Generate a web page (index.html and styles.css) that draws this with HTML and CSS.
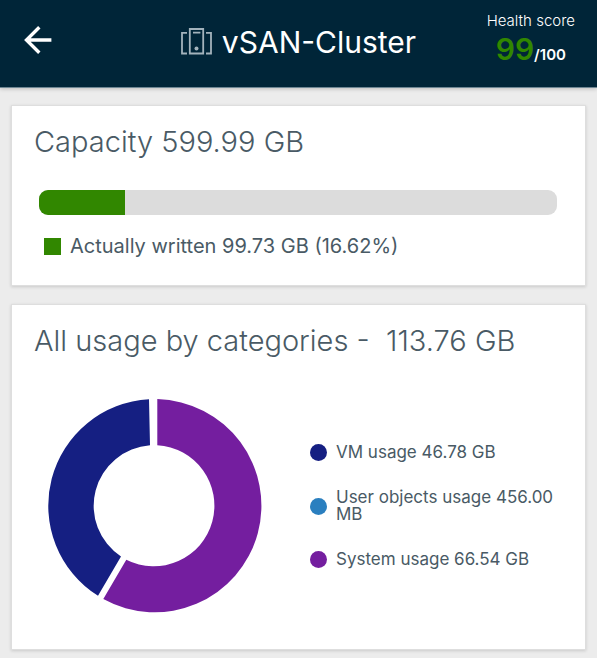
FILE: index.html
```html
<!doctype html>
<html lang="en">
<head>
	<meta charset="utf-8">
	<meta name="viewport" content="width=device-width, initial-scale=1.0">
	<title>vSAN-Cluster</title>
	<link rel="stylesheet" href="styles.css">
</head>
<body>
	<header class="header">
		<button class="back" type="button" aria-label="Back">
			<svg width="28" height="28" viewBox="0 0 28 28" fill="none" stroke="#fff" stroke-width="3.4">
				<path d="M27.4 14H3M15.3 1.2L2.5 14l12.8 12.8" />
			</svg>
		</button>
		<h1 class="title">
			<svg width="31" height="27" viewBox="0 0 31 27" fill="none" stroke="#a3b3bc" stroke-width="1.8" aria-hidden="true">
				<path d="M6 4.8H1V25.5H6M25 4.8H30V25.5H25" />
				<path d="M8.8 1H22.2V25.5H8.8ZM12 4.6H19.4" />
				<circle cx="15.5" cy="20.5" r="2" fill="#a3b3bc" stroke="none" />
			</svg>
			<span>vSAN-Cluster</span>
		</h1>
		<div class="health">
			<div class="health-label">Health score</div>
			<div class="health-score"><span class="score">99</span>/100</div>
		</div>
	</header>
	<main class="content">
		<section class="card">
			<h2>Capacity 599.99 GB</h2>
			<div class="bar">
				<div class="bar-used" style="width: 16.62%"></div>
			</div>
			<div class="written"><span class="square"></span>Actually written 99.73 GB (16.62%)</div>
		</section>
		<section class="card card-usage">
			<h2>All usage by categories - &nbsp;113.76 GB</h2>
			<div class="usage">
				<svg class="donut" width="214" height="214" viewBox="0 0 214 214" role="img" aria-label="Usage by categories">
					<path fill="#741e9f" d="M109.3 .1A106.6 106.6 0 1 1 55.3 200L78.3 160.7A60.6 60.6 0 1 0 109.3 46.2Z" />
					<path fill="#151f82" d="M101 .2A106.6 106.6 0 0 0 50 196.8L73 157.4A60.6 60.6 0 0 1 102 46.3Z" />
				</svg>
				<ul class="legend">
					<li><span class="dot dot-vm"></span>VM usage 46.78 GB</li>
					<li><span class="dot dot-user"></span>User objects usage 456.00 MB</li>
					<li><span class="dot dot-system"></span>System usage 66.54 GB</li>
				</ul>
			</div>
		</section>
	</main>
</body>
</html>
```
FILE: styles.css
```css
* {
	box-sizing: border-box;
}
body {
	margin: 0;
	background: #ececec;
	color: #495a65;
	font-family: Inter, "Open Sans", sans-serif;
}
h1, h2 {
	margin: 0;
	font-weight: 300;
	line-height: 36px;
}
h2 {
	font-size: 29px;
}

/* header */
.header {
	display: grid;
	grid-template-columns: 1fr auto 1fr;
	align-items: center;
	height: 88px;
	padding: 0 22px;
	background: #002538;
	border-bottom: 1px solid #6e8794;
	box-shadow: 0 1px 4px rgba(0, 0, 0, 0.2);
	color: #fff;
}
.back {
	justify-self: start;
	padding: 0 2px 8px;
	border: 0;
	background: none;
	line-height: 0;
	cursor: pointer;
}
.title {
	display: flex;
	align-items: center;
	gap: 10px;
	padding-bottom: 4px;
	font-size: 30px;
	font-weight: 400;
}
.health {
	justify-self: end;
	padding-bottom: 4px;
	text-align: center;
}
.health-label {
	font-size: 15px;
	font-weight: 300;
	line-height: 20px;
}
.health-score {
	font-size: 15px;
	font-weight: 600;
	line-height: 36px;
}
.score {
	color: #318700;
	font-size: 30px;
}

/* cards */
.content {
	display: grid;
	gap: 18px;
	padding: 17px 11px 8px;
}
.card {
	padding: 18px 28px 27px 22px;
	border: 1px solid #dedede;
	background: #fff;
	box-shadow: 0 1px 3px rgba(0, 0, 0, 0.15);
}
.bar {
	height: 25px;
	margin: 30px 0 19px 5px;
	border-radius: 9px;
	background: #dcdcdc;
	overflow: hidden;
}
.bar-used {
	height: 100%;
	background: #318700;
}
.written {
	display: flex;
	align-items: center;
	gap: 9px;
	padding-left: 10px;
	font-size: 20px;
	line-height: 24px;
}
.square {
	width: 17px;
	height: 17px;
	background: #318700;
}
.card-usage {
	padding-bottom: 36px;
}
.usage {
	display: flex;
	align-items: center;
	gap: 48px;
	margin-top: 40px;
	padding-left: 14px;
}
.donut {
	flex: none;
}
.legend {
	display: grid;
	gap: 28px;
	margin: 0;
	padding: 0;
	list-style: none;
	font-size: 17px;
	line-height: 17px;
}
.legend li {
	display: flex;
	align-items: center;
	gap: 9px;
}
.dot {
	flex: none;
	width: 17px;
	height: 17px;
	border-radius: 50%;
}
.dot-vm {
	background: #151f82;
}
.dot-user {
	background: #2a7fbf;
}
.dot-system {
	background: #741e9f;
}
```
